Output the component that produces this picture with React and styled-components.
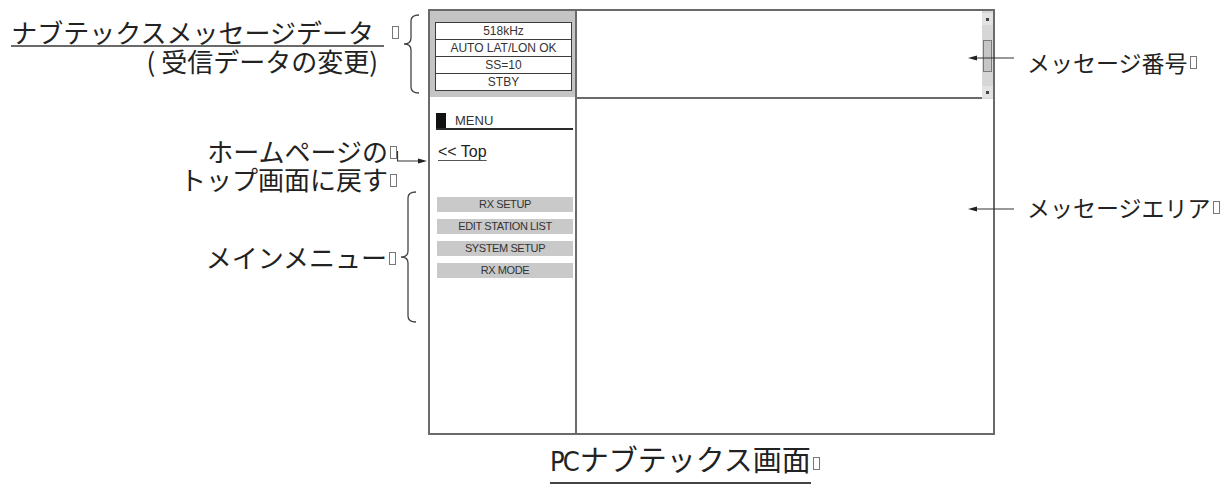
import React from 'react';
import styled, { createGlobalStyle } from 'styled-components';

const GlobalStyle = createGlobalStyle`
  html, body {
    margin: 0;
    padding: 0;
    background: #fff;
  }
  body {
    font-family: "Noto Sans CJK JP", "Noto Sans", sans-serif;
    color: #222;
  }
`;

const LINE = '#6a6a6a';

const Brace = ({ width, height, tip }) => {
  const m = width / 2;
  const d = `M ${width} 1 Q ${m} 1 ${m} 7 L ${m} ${tip - 6} Q ${m} ${tip} 1 ${tip} Q ${m} ${tip} ${m} ${tip + 6} L ${m} ${height - 7} Q ${m} ${height - 1} ${width} ${height - 1}`;
  return (
    <BraceSvg width={width} height={height} viewBox={`0 0 ${width} ${height}`}>
      <path d={d} fill='none' stroke='#444' strokeWidth='1.3' />
    </BraceSvg>
  );
};

const LeftArrow = ({ y }) => (
  <ArrowSvg width='46' height='26' viewBox='0 0 46 26'>
    <line x1='6' y1={y} x2='46' y2={y} stroke='#333' strokeWidth='1.2' />
    <polygon points={`0,${y} 9,${y - 2.5} 9,${y + 2.5}`} fill='#222' />
  </ArrowSvg>
);

const TopArrow = () => (
  <TopArrowSvg width='30' height='28' viewBox='0 0 30 28'>
    <path d='M 0.5 14 L 0.5 24 L 24 24' fill='none' stroke='#333' strokeWidth='1.2' />
    <polygon points='30,24 21,21.5 21,26.5' fill='#222' />
  </TopArrowSvg>
);

const statusRows = ['518kHz', 'AUTO LAT/LON OK', 'SS=10', 'STBY'];
const menuItems = ['RX SETUP', 'EDIT STATION LIST', 'SYSTEM SETUP', 'RX MODE'];

const App = () => (
  <Page>
    <GlobalStyle />
    <Diagram>
      <LeftNotes>
        <NoteTop>
          <TextCol>
            <TitleRow>
              <Underlined>ナブテックスメッセージデータ</Underlined>
              <Tofu />
            </TitleRow>
            <SubLine>( 受信データの変更)</SubLine>
          </TextCol>
          <Brace width={16} height={80} tip={30} />
        </NoteTop>

        <NoteHome>
          <TextCol>
            <NoteLine>
              ホームページの<Tofu />
            </NoteLine>
            <NoteLine>
              トップ画面に戻す<Tofu />
            </NoteLine>
          </TextCol>
          <TopArrow />
        </NoteHome>

        <NoteMenu>
          <NoteLine>
            メインメニュー<Tofu />
          </NoteLine>
          <Brace width={16} height={132} tip={66} />
        </NoteMenu>
      </LeftNotes>

      <Screen>
        <SideBar>
          <StatusPanel>
            <StatusBox>
              {statusRows.map((r) => (
                <StatusRow key={r}>{r}</StatusRow>
              ))}
            </StatusBox>
          </StatusPanel>

          <MenuHeader>
            <MenuMark />
            <MenuTitle>MENU</MenuTitle>
          </MenuHeader>

          <TopLink href='#'>&lt;&lt; Top</TopLink>

          <MenuList>
            {menuItems.map((m) => (
              <MenuButton key={m}>{m}</MenuButton>
            ))}
          </MenuList>
        </SideBar>

        <Main>
          <NumberPanel>
            <NumberArea />
            <ScrollBar>
              <ScrollButton>
                <Dot />
              </ScrollButton>
              <Thumb />
              <ScrollButton>
                <Dot />
              </ScrollButton>
            </ScrollBar>
          </NumberPanel>
        </Main>
      </Screen>

      <RightNotes>
        <RightNote $top={40}>
          <LeftArrow y={9} />
          <span>
            メッセージ番号<Tofu />
          </span>
        </RightNote>
        <RightNote $top={119}>
          <LeftArrow y={15} />
          <span>
            メッセージエリア<Tofu />
          </span>
        </RightNote>
      </RightNotes>
    </Diagram>

    <Caption>
      <CaptionText>
        <Latin>PC</Latin>ナブテックス画面
      </CaptionText>
      <Tofu />
    </Caption>
  </Page>
);

export default App;

const Page = styled.div`
  width: 1224px;
  height: 490px;
  overflow: hidden;
`;

const Diagram = styled.div`
  display: flex;
  align-items: flex-start;
  padding-top: 9px;
`;

const LeftNotes = styled.div`
  width: 428px;
  flex-shrink: 0;
  display: flex;
  flex-direction: column;
  font-size: 26px;
  color: #222;
`;

const NoteTop = styled.div`
  display: flex;
  justify-content: flex-end;
  align-items: flex-start;
  margin-top: 5px;
  padding-right: 9px;
`;

const TextCol = styled.div`
  display: flex;
  flex-direction: column;
  align-items: flex-end;
`;

const TitleRow = styled.div`
  display: flex;
  align-items: center;
  margin-top: 4px;
  line-height: 27px;
`;

const Underlined = styled.span`
  border-bottom: 2px solid ${LINE};
  padding-right: 10px;
  margin-right: 6px;
`;

const SubLine = styled.div`
  line-height: 27px;
  margin-right: 21px;
`;

const Tofu = styled.span`
  display: inline-block;
  width: 5px;
  height: 11px;
  border: 1px solid #777;
  margin-left: 2px;
  vertical-align: 3px;
`;

const BraceSvg = styled.svg`
  display: block;
  flex-shrink: 0;
  margin-left: 4px;
`;

const NoteHome = styled.div`
  display: flex;
  justify-content: flex-end;
  align-items: flex-start;
  margin-top: 43px;
  padding-right: 1px;
`;

const NoteLine = styled.div`
  line-height: 28px;
  white-space: nowrap;
`;

const TopArrowSvg = styled.svg`
  display: block;
  flex-shrink: 0;
`;

const NoteMenu = styled.div`
  display: flex;
  justify-content: flex-end;
  align-items: center;
  margin-top: -2px;
  padding-right: 12px;
`;

const Screen = styled.div`
  width: 567px;
  height: 426px;
  flex-shrink: 0;
  box-sizing: border-box;
  border: 2px solid ${LINE};
  display: flex;
  font-family: "Liberation Sans", Arial, sans-serif;
`;

const SideBar = styled.div`
  width: 145px;
  flex-shrink: 0;
  border-right: 2px solid ${LINE};
  display: flex;
  flex-direction: column;
`;

const StatusPanel = styled.div`
  background: #c4c4c4;
  padding: 11px 3px 6px 5px;
`;

const StatusBox = styled.div`
  border: 1px solid #3c3c3c;
  background: #fff;
`;

const StatusRow = styled.div`
  height: 16px;
  line-height: 16px;
  text-align: center;
  font-size: 12px;
  color: #333;
  & + & {
    border-top: 1px solid #3c3c3c;
  }
`;

const MenuHeader = styled.div`
  display: flex;
  align-items: flex-end;
  margin: 16px 2px 0 6px;
  border-bottom: 2px solid #2a2a2a;
`;

const MenuMark = styled.span`
  width: 10px;
  height: 15px;
  background: #111;
`;

const MenuTitle = styled.span`
  margin-left: 9px;
  font-size: 13px;
  line-height: 15px;
  color: #333;
`;

const TopLink = styled.a`
  align-self: flex-start;
  margin: 13px 0 0 8px;
  font-size: 16px;
  line-height: 18px;
  color: #222;
  text-decoration: underline;
  text-decoration-color: #555;
  text-underline-offset: 3px;
`;

const MenuList = styled.div`
  display: flex;
  flex-direction: column;
  gap: 7px;
  margin: 36px 2px 0 7px;
`;

const MenuButton = styled.div`
  height: 15px;
  line-height: 15px;
  background: #c9c9c9;
  text-align: center;
  font-size: 11px;
  letter-spacing: -0.4px;
  color: #333;
`;

const Main = styled.div`
  flex: 1;
  display: flex;
  flex-direction: column;
`;

const NumberPanel = styled.div`
  height: 88px;
  display: flex;
`;

const NumberArea = styled.div`
  flex: 1;
  border-bottom: 2px solid ${LINE};
`;

const ScrollBar = styled.div`
  width: 11px;
  display: flex;
  flex-direction: column;
  justify-content: space-between;
  align-items: center;
  background: #d6d6d6;
  padding: 2px 0 1px;
`;

const ScrollButton = styled.div`
  width: 11px;
  height: 12px;
  background: #e2e2e2;
  display: flex;
  align-items: center;
  justify-content: center;
`;

const Dot = styled.span`
  width: 3px;
  height: 3px;
  background: #444;
`;

const Thumb = styled.div`
  width: 7px;
  height: 30px;
  border: 1px solid #7a7a7a;
  background: #c6c6c6;
`;

const RightNotes = styled.div`
  flex: 1;
  display: flex;
  flex-direction: column;
  font-size: 23px;
  color: #222;
`;

const RightNote = styled.div`
  display: flex;
  align-items: center;
  gap: 13px;
  margin-top: ${(p) => p.$top}px;
  line-height: 26px;
  white-space: nowrap;
`;

const ArrowSvg = styled.svg`
  display: block;
  flex-shrink: 0;
  margin-left: -27px;
  position: relative;
  z-index: 1;
`;

const Caption = styled.div`
  display: flex;
  align-items: center;
  margin: 7px 0 0 550px;
  font-size: 29px;
  line-height: 32px;
  color: #222;
`;

const CaptionText = styled.span`
  border-bottom: 2px solid #444;
  padding-bottom: 4px;
`;

const Latin = styled.span`
  font-family: "DejaVu Sans Condensed", "Liberation Sans", sans-serif;
  font-size: 27px;
  letter-spacing: -2px;
  margin-right: 2px;
`;
